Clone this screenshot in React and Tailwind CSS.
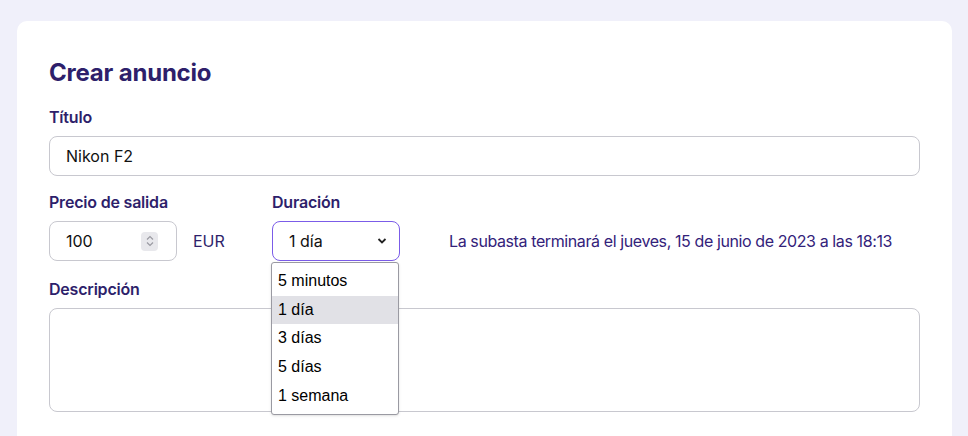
import React from 'react';

const options = ['5 minutos', '1 día', '3 días', '5 días', '1 semana'];

const Label = ({ children }) => (
    <div className="text-[16px] font-semibold text-[#2e1f6b] leading-6 mb-[7px] tracking-[-0.2px]">{children}</div>
);

const App = () => {
    return (
        <div className="min-h-[436px] bg-[#f0f0fa] pt-[21px] pl-[17px] pr-[16px] overflow-hidden" style={{ fontFamily: 'Inter, "Noto Sans", sans-serif' }}>
            <div className="bg-white rounded-t-[10px] px-[32px] pt-[36px] pb-[40px] h-[430px]">
                <h1 className="text-[24px] font-bold text-[#2e1f6b] leading-8 tracking-[-0.2px] mb-[16px]">Crear anuncio</h1>

                <Label>Título</Label>
                <div className="h-[40px] border border-[#c8c8cf] rounded-lg flex items-center px-4 text-[16px] text-[#111]">Nikon F2</div>

                <div className="flex mt-[14px] items-start">
                    <div className="w-[223px]">
                        <Label>Precio de salida</Label>
                        <div className="flex items-center mt-[1px]">
                            <div className="w-[128px] h-[40px] border border-[#c8c8cf] rounded-lg flex items-center pl-4 pr-[18px] text-[16px] text-[#111]">
                                <span className="flex-1">100</span>
                                <div className="w-[17px] h-[19px] bg-[#e8e8ec] rounded-sm flex items-center justify-center">
                                    <svg width="10" height="14" viewBox="0 0 10 14" fill="none" stroke="#9a9aa2" strokeWidth="1.2">
                                        <path d="M2 5.5 L5 2.5 L8 5.5" />
                                        <path d="M2 8.5 L5 11.5 L8 8.5" />
                                    </svg>
                                </div>
                            </div>
                            <span className="ml-[16px] text-[16px] text-[#2e1f6b]">EUR</span>
                        </div>
                    </div>
                    <div className="relative">
                        <Label>Duración</Label>
                        <div className="flex items-center mt-[1px]">
                            <div className="w-[128px] h-[40px] border border-[#7b5ce8] rounded-lg flex items-center pl-4 pr-3 text-[16px] text-[#111]">
                                <span className="flex-1">1 día</span>
                                <svg width="10" height="8" viewBox="0 0 10 8" fill="none" stroke="#222" strokeWidth="1.8">
                                    <path d="M1.5 2 L5 5.5 L8.5 2" />
                                </svg>
                            </div>
                            <span className="ml-[49px] text-[16px] text-[#33227a] tracking-[-0.4px]">La subasta terminará el jueves, 15 de junio de 2023 a las 18:13</span>
                        </div>
                        <div className="absolute left-[-1px] top-[72px] w-[128px] bg-white border border-[#9a9aa2] rounded-[3px] shadow-sm py-[4px] z-10" style={{ fontFamily: '"Liberation Sans", Arial, sans-serif' }}>
                            {options.map((o) => (
                                <div key={o} className={`h-[28.6px] px-[6px] flex items-center text-[16px] text-black ${o === '1 día' ? 'bg-[#e1e1e6]' : ''}`}>{o}</div>
                            ))}
                        </div>
                    </div>
                </div>

                <div className="mt-[16px]">
                    <Label>Descripción</Label>
                    <div className="h-[104px] border border-[#c8c8cf] rounded-lg" />
                </div>
            </div>
        </div>
    );
};

export default App;
